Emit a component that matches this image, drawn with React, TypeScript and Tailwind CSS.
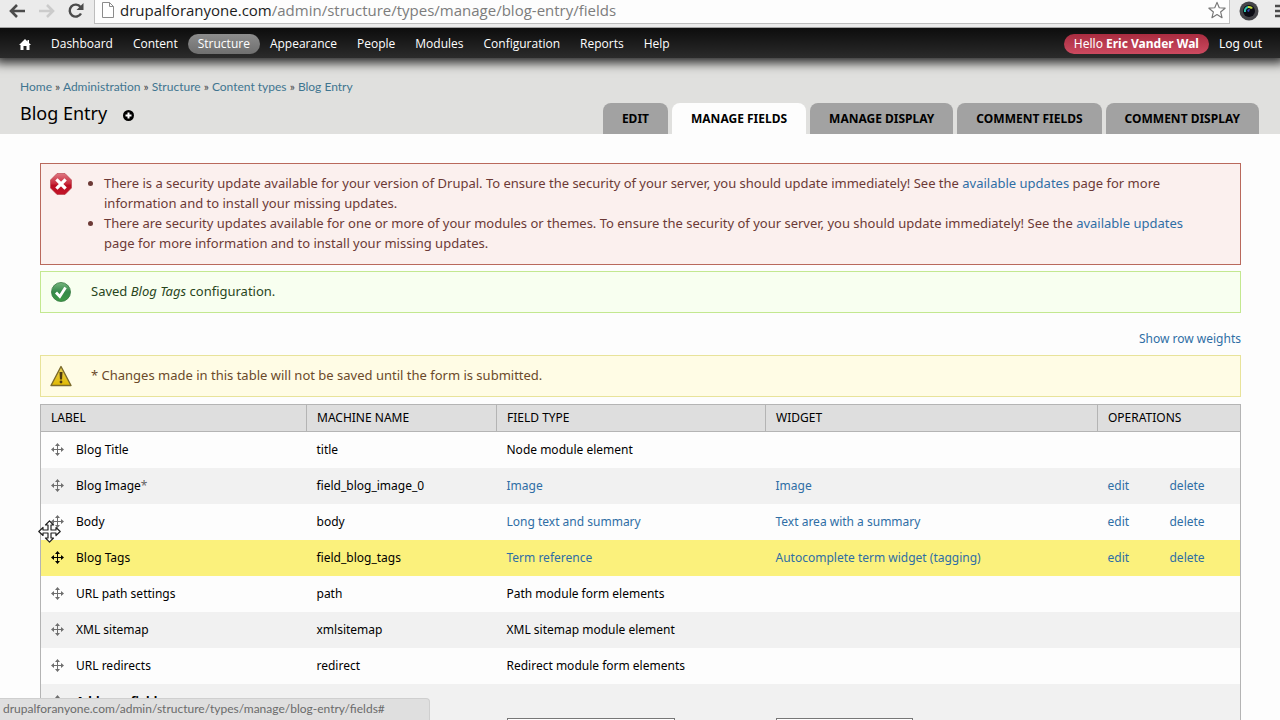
import type { ReactNode } from "react";
import { clsx } from "clsx";

type Field = {
  label: string;
  required?: boolean;
  name: string;
  type: string;
  widget?: string;
  changed?: boolean;
};

const menu = [
  "Dashboard",
  "Content",
  "Structure",
  "Appearance",
  "People",
  "Modules",
  "Configuration",
  "Reports",
  "Help",
];

const crumbs = ["Home", "Administration", "Structure", "Content types", "Blog Entry"];

const tabs = ["Edit", "Manage fields", "Manage display", "Comment fields", "Comment display"];

const fields: Field[] = [
  { label: "Blog Title", name: "title", type: "Node module element" },
  { label: "Blog Image", required: true, name: "field_blog_image_0", type: "Image", widget: "Image" },
  { label: "Body", name: "body", type: "Long text and summary", widget: "Text area with a summary" },
  {
    label: "Blog Tags",
    name: "field_blog_tags",
    type: "Term reference",
    widget: "Autocomplete term widget (tagging)",
    changed: true,
  },
  { label: "URL path settings", name: "path", type: "Path module form elements" },
  { label: "XML sitemap", name: "xmlsitemap", type: "XML sitemap module element" },
  { label: "URL redirects", name: "redirect", type: "Redirect module form elements" },
];

function Link({ children }: { children: ReactNode }) {
  return (
    <a href="#" className="text-[#2f6ea5]">
      {children}
    </a>
  );
}

function DragHandle({ active }: { active?: boolean }) {
  return (
    <svg
      viewBox="0 0 13 13"
      className={clsx("size-[13px] shrink-0", active ? "text-black" : "text-[#6e6e6e]")}
      fill="currentColor"
    >
      <path d="M6 2h1v4h4v1H7v4H6V7H2V6h4z" />
      <path d="M6.5 0 9 3H4zM6.5 13 4 10h5zM0 6.5 3 4v5zM13 6.5 10 9V4z" />
    </svg>
  );
}

function ErrorIcon() {
  return (
    <svg viewBox="0 0 22 22" className="size-[22px]">
      <defs>
        <linearGradient id="err" x1="0" y1="0" x2="0" y2="1">
          <stop offset="0" stopColor="#de7680" />
          <stop offset="0.5" stopColor="#c8283a" />
          <stop offset="0.55" stopColor="#b90d22" />
          <stop offset="1" stopColor="#c31428" />
        </linearGradient>
      </defs>
      <path d="M7 .5h8L21.500 7v8L15 21.500H7L.5 15V7z" fill="url(#err)" stroke="#b33a45" strokeWidth="0.6" />
      <path d="m7.500 7.500 7 7M14.500 7.500l-7 7" stroke="#fff" strokeWidth="3.200" strokeLinecap="square" />
    </svg>
  );
}

function StatusIcon() {
  return (
    <svg viewBox="0 0 22 22" className="size-[22px]">
      <defs>
        <linearGradient id="ok" x1="0" y1="0" x2="0" y2="1">
          <stop offset="0" stopColor="#76b57f" />
          <stop offset="0.5" stopColor="#35894a" />
          <stop offset="1" stopColor="#3c9a45" />
        </linearGradient>
      </defs>
      <circle cx="11" cy="11" r="9.500" fill="url(#ok)" stroke="#33773f" strokeWidth="0.8" />
      <path d="m6 11.500 3.800 4L15.500 6.500" fill="none" stroke="#fff" strokeWidth="2.800" />
    </svg>
  );
}

function WarningIcon() {
  return (
    <svg viewBox="0 0 22 22" className="size-[22px]">
      <defs>
        <linearGradient id="warn" x1="0" y1="0" x2="0" y2="1">
          <stop offset="0" stopColor="#e9d35c" />
          <stop offset="1" stopColor="#e0b800" />
        </linearGradient>
      </defs>
      <path d="M11 1.500 21 20.500H1z" fill="url(#warn)" stroke="#7b6a2c" strokeWidth="1.400" strokeLinejoin="round" />
      <path d="M9.500 7h3l-.5 7.500h-2z" fill="#4d3a12" />
      <circle cx="11" cy="17" r="1.400" fill="#4d3a12" />
    </svg>
  );
}

function Message({ icon, className, children }: { icon: ReactNode; className: string; children: ReactNode }) {
  return (
    <div className={clsx("flex gap-[19px] border px-[9px] pt-[9px] text-[13px] leading-5", className)}>
      <span className="shrink-0">{icon}</span>
      <div className="grow">{children}</div>
    </div>
  );
}

function BrowserBar() {
  return (
    <div className="relative z-20 flex h-7 items-start border-b border-[#a3a3a3] bg-[#ebebeb]">
      <div className="flex h-[22px] w-[94px] shrink-0 items-center gap-3 pl-2">
        <button aria-label="Back">
          <svg viewBox="0 0 18 14" className="h-3.5 w-[18px]" fill="none" stroke="#4b4b4b" strokeWidth="2.600">
            <path d="M9 1 3 7l6 6M3 7h14" />
          </svg>
        </button>
        <button aria-label="Forward">
          <svg viewBox="0 0 18 14" className="h-3.5 w-[18px]" fill="none" stroke="#cbcbcb" strokeWidth="2.600">
            <path d="m9 1 6 6-6 6M15 7H1" />
          </svg>
        </button>
        <button aria-label="Reload">
          <svg viewBox="0 0 16 16" className="size-4" fill="none" stroke="#4b4b4b" strokeWidth="2.400">
            <path d="M13 10.500A6 6 0 1 1 12.500 4" />
            <path d="M15.500 0v7h-7z" fill="#4b4b4b" stroke="none" />
          </svg>
        </button>
      </div>
      <div className="flex h-6 grow items-center gap-1.5 border-b border-l border-r border-[#bdbdbd] bg-[#fdfdfd] pr-[3px] pb-1 pl-[7px]">
        <svg viewBox="0 0 12 16" className="h-4 w-3 shrink-0" fill="#fff" stroke="#8b8b8b">
          <path d="M.5 .5h7l4 4v11H.5zM7.500 .5v4h4" />
        </svg>
        <div className="grow font-['Open_Sans',sans-serif] text-[15px] leading-5 text-[#7c7c7c]">
          <span className="text-[#1c1c1c]">drupalforanyone.com</span>
          /admin/structure/types/manage/blog-entry/fields
        </div>
        <button aria-label="Bookmark this page">
          <svg viewBox="0 0 20 20" className="size-[18px]" fill="#fff" stroke="#777" strokeWidth="1.300" strokeLinejoin="round">
            <path d="m10 1.500 2.500 6 6.500.5-5 4.200 1.600 6.300-5.600-3.400-5.600 3.400L6 12.200 1 8l6.500-.5z" />
          </svg>
        </button>
      </div>
      <div className="flex h-[22px] w-[50px] shrink-0 items-center gap-4 overflow-hidden pl-[9px]">
        <svg viewBox="0 0 20 20" className="size-5 shrink-0">
          <circle cx="10" cy="10" r="9.500" fill="#444449" />
          <circle cx="10" cy="10" r="6" fill="#0b0b14" />
          <path d="M5 11a5 5 0 0 1 4-6l1 2a3 3 0 0 0-3 4z" fill="#2fc4b0" />
          <path d="M9 5a5 5 0 0 1 5 2l-2 1a3 3 0 0 0-3-1z" fill="#c6dc3c" />
          <path d="M8 10a3 3 0 0 1 3-2l-1 3z" fill="#3848b8" />
        </svg>
        <svg viewBox="0 0 16 14" className="h-3.5 w-4 shrink-0" stroke="#4b4b4b" strokeWidth="2.600">
          <path d="M0 2h16M0 7h16M0 12h16" />
        </svg>
      </div>
    </div>
  );
}

function AdminToolbar() {
  return (
    <div className="relative z-10 flex h-[30px] items-center bg-linear-to-b from-[#0d0d0d] to-[#2b2b2b] pt-0.5 pr-2 pl-[9px] text-[12px] leading-5 text-white shadow-[0_0_10px_5px_#2b2b2b]">
      <a href="#" aria-label="Home" className="px-2.5">
        <svg viewBox="0 0 12 11" className="h-[11px] w-3" fill="#fff">
          <path d="M6 0 0 6h1.500v5h3V7h3v4h3V6H12L10 4V1H8.500v1.500z" />
        </svg>
      </a>
      <nav className="flex grow font-['Open_Sans',sans-serif] font-medium">
        {menu.map((item) => (
          <a
            key={item}
            href="#"
            className={clsx("rounded-full px-2.5", item === "Structure" && "bg-linear-to-b from-[#8c8c8c] to-[#6f6f6f]")}
          >
            {item}
          </a>
        ))}
      </nav>
      <a href="#" className="rounded-full bg-linear-to-b from-[#a92c40] to-[#cc4a60] px-2.5">
        Hello <strong>Eric Vander Wal</strong>
      </a>
      <a href="#" className="px-2.5">
        Log out
      </a>
    </div>
  );
}

function PageHeader() {
  return (
    <header className="flex items-end justify-between bg-[#e0e0de] pr-[21px] pl-5">
      <div className="pt-5 pb-2">
        <nav className="font-[Lato,sans-serif] text-[12px] leading-[18px]">
          {crumbs.map((crumb, i) => (
            <span key={crumb}>
              {i > 0 && <span className="text-[#444]"> » </span>}
              <a href="#" className="text-[#3f7590]">
                {crumb}
              </a>
            </span>
          ))}
        </nav>
        <div className="flex items-center gap-4 pt-1">
          <h1 className="text-[18px] leading-[26px]">Blog Entry</h1>
          <button aria-label="Add to shortcuts" className="pt-1">
            <svg viewBox="0 0 11 11" className="size-[11px]">
              <circle cx="5.500" cy="5.500" r="5.500" fill="#000" />
              <path d="M5.500 2.500v6M2.500 5.500h6" stroke="#fff" strokeWidth="2" />
            </svg>
          </button>
        </div>
      </div>
      <nav className="flex gap-1">
        {tabs.map((tab) => (
          <a
            key={tab}
            href="#"
            className={clsx(
              "rounded-t-lg px-[19px] text-[12px] leading-[31px] font-bold uppercase",
              tab === "Manage fields" ? "bg-[#fdfdfd]" : "bg-[#a2a2a2]",
            )}
          >
            {tab}
          </a>
        ))}
      </nav>
    </header>
  );
}

function FieldTable() {
  return (
    <table className="mt-[7px] w-full table-fixed border-collapse border border-[#b4b4b4] text-[12px] leading-5">
      <colgroup>
        <col className="w-[266px]" />
        <col className="w-[190px]" />
        <col className="w-[269px]" />
        <col />
        <col className="w-[62px]" />
        <col className="w-[81px]" />
      </colgroup>
      <thead>
        <tr className="h-[27px] border-b border-[#b4b4b4] bg-[#dedede] text-left uppercase *:border-r *:border-[#b4b4b4] *:px-2.5 *:font-normal">
          <th>Label</th>
          <th>Machine name</th>
          <th>Field type</th>
          <th>Widget</th>
          <th colSpan={2}>Operations</th>
        </tr>
      </thead>
      <tbody>
        {fields.map((field) => (
          <tr
            key={field.name}
            className={clsx("h-9 *:px-2.5", field.changed ? "bg-[#fbf17c]" : "odd:bg-[#fdfdfd] even:bg-[#f1f1f1]")}
          >
            <td>
              <div className="flex items-center gap-3">
                <DragHandle active={field.changed} />
                <span>
                  {field.label}
                  {field.required && <span className="text-[#666]">*</span>}
                </span>
              </div>
            </td>
            <td>{field.name}</td>
            <td>{field.widget ? <Link>{field.type}</Link> : field.type}</td>
            <td>{field.widget && <Link>{field.widget}</Link>}</td>
            <td>{field.widget && <Link>edit</Link>}</td>
            <td>{field.widget && <Link>delete</Link>}</td>
          </tr>
        ))}
        <tr className="bg-[#f1f1f1] align-top *:px-2.5 *:pt-2">
          <td>
            <label htmlFor="new-label" className="flex items-center gap-3 font-bold">
              <DragHandle />
              Add new field
            </label>
            <input id="new-label" className="mt-1.5 ml-[25px] h-6 w-36 border border-[#999] bg-white" />
          </td>
          <td />
          <td>
            <select aria-label="Type of data to store" className="mt-[26px] h-6 w-[168px] border border-[#777] bg-white">
              <option>- Select a field type -</option>
            </select>
          </td>
          <td>
            <select aria-label="Form element" className="mt-[26px] h-6 w-[137px] border border-[#777] bg-white">
              <option>- Select a widget -</option>
            </select>
          </td>
          <td />
          <td />
        </tr>
      </tbody>
    </table>
  );
}

export default function App() {
  return (
    <div className="relative h-screen overflow-hidden bg-[#fdfdfd] font-['Noto_Sans',sans-serif] text-black">
      <BrowserBar />
      <AdminToolbar />
      <PageHeader />
      <main className="pt-[29px] pr-[39px] pl-10">
        <Message icon={<ErrorIcon />} className="border-[#b9695c] bg-[#fbf0ee] pb-[11px] text-[#6c3a36]">
          <ul className="list-disc pl-[13px]">
            <li>
              There is a security update available for your version of Drupal. To ensure the security of your server,
              you should update immediately! See the <Link>available updates</Link> page for more
              <br />
              information and to install your missing updates.
            </li>
            <li>
              There are security updates available for one or more of your modules or themes. To ensure the security of
              your server, you should update immediately! See the <Link>available updates</Link>
              <br />
              page for more information and to install your missing updates.
            </li>
          </ul>
        </Message>
        <Message icon={<StatusIcon />} className="mt-1.5 border-[#c3e890] bg-[#f8fff0] pb-[9px] text-[#29461c]">
          Saved <em>Blog Tags</em> configuration.
        </Message>
        <div className="pt-4 pb-1.5 text-right text-[12px] leading-5">
          <Link>Show row weights</Link>
        </div>
        <Message icon={<WarningIcon />} className="border-[#e8e39a] bg-[#fffce5] pb-[9px] text-[#6b4a2a]">
          * Changes made in this table will not be saved until the form is submitted.
        </Message>
        <FieldTable />
      </main>

      {/* move cursor over the drag handles */}
      <svg
        viewBox="0 0 23 23"
        className="absolute top-[520px] left-[38px] size-[23px]"
        fill="#fff"
        stroke="#222"
        strokeWidth="1.200"
        strokeLinejoin="round"
      >
        <path d="M11.500 .8 15.500 5H13v5h5V7.500l4.200 4-4.200 4V13h-5v5h2.500l-4 4.200-4-4.200H10v-5H5v2.500l-4.200-4L5 7.500V10h5V5H7.500z" />
      </svg>
      <div className="absolute bottom-0 left-0 h-[22px] w-[430px] truncate rounded-tr-sm border-t border-r border-[#cfcfcf] bg-[#dfdfdf] pl-[3px] font-[Lato,sans-serif] text-[12px] leading-5 text-[#6b6b6b]">
        drupalforanyone.com/admin/structure/types/manage/blog-entry/fields#
      </div>
    </div>
  );
}
